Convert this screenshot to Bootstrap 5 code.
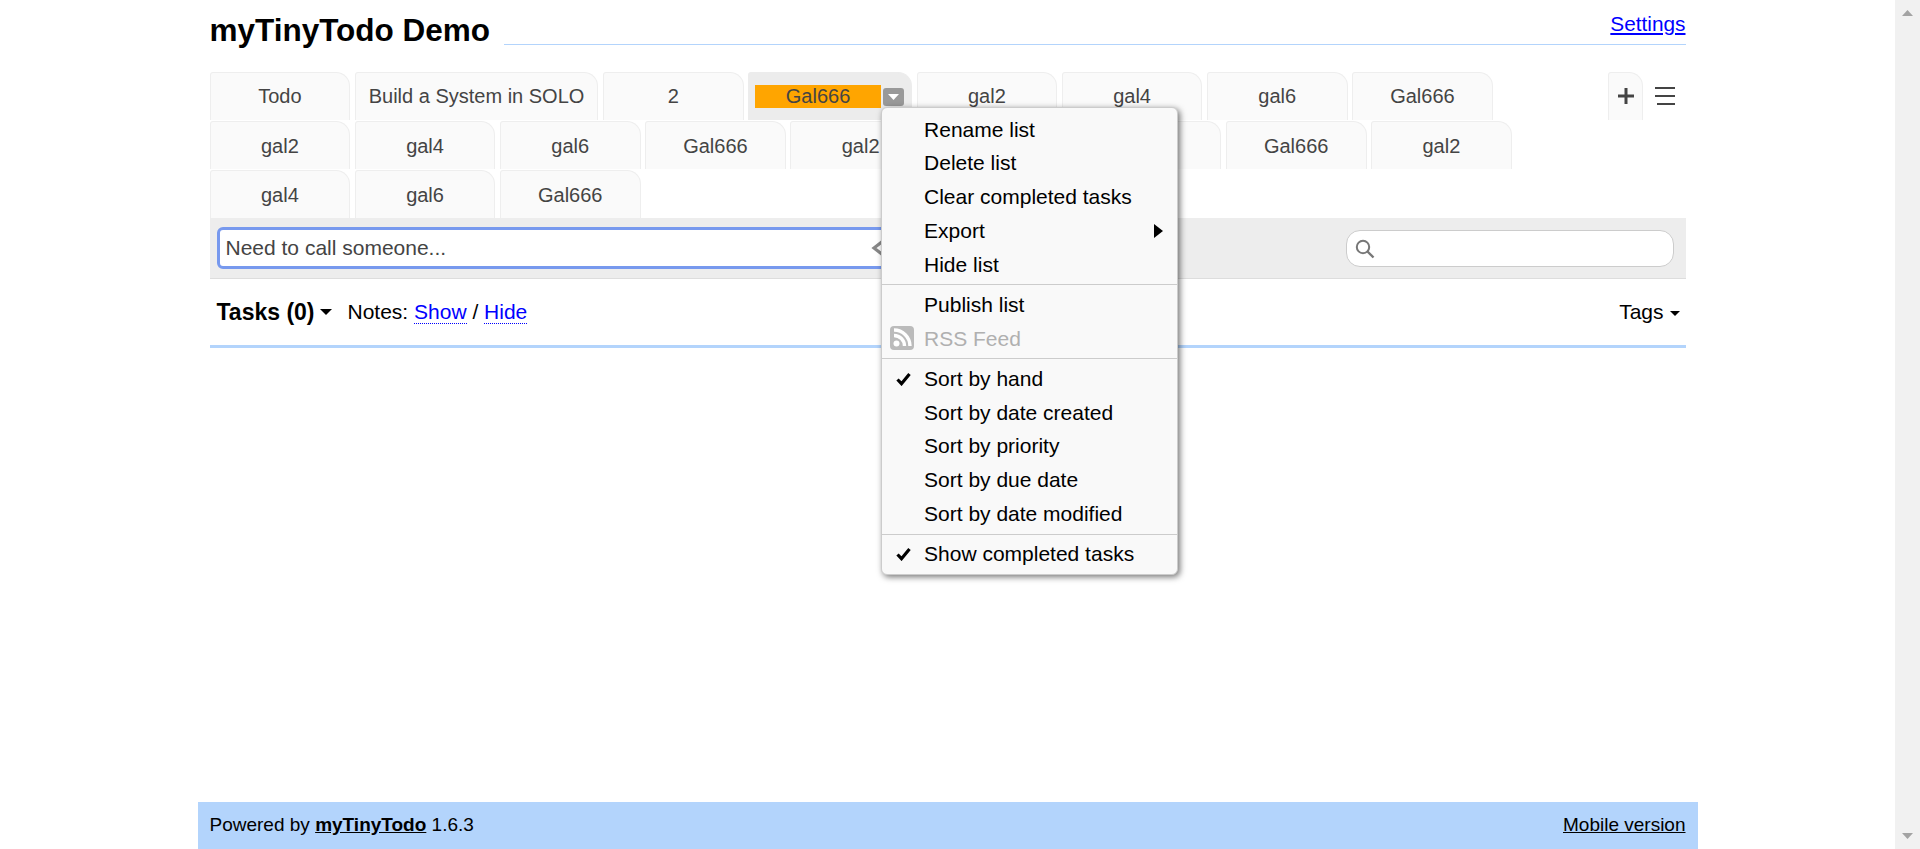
<!DOCTYPE html>
<html lang="en">
<head>
  <meta charset="UTF-8" />
  <meta name="viewport" content="width=device-width, initial-scale=1" />
  <title>myTinyTodo Demo</title>
  <link href="https://cdn.jsdelivr.net/npm/bootstrap@5.3.0/dist/css/bootstrap.min.css" rel="stylesheet" />
  <style>
    html, body { height: 849px; overflow: hidden; }
    body { font-family: "Liberation Sans", Arial, sans-serif; font-size: 21px; color: #000; background: #fff; }
    a { color: #0000ff; }

    .shell { height: 849px; }
    .page-area { min-width: 0; }
    .wrap { width: 1500px; height: 849px; margin: 0 auto; }
    .wrap-inner { padding: 0 12px; }

    .fake-scroll { width: 25px; background: #f1f1f1; padding: 10px 0; }
    .fake-scroll svg { display: block; }

    .top-bar { height: 72px; }
    .app-title { font-size: 31.5px; font-weight: 700; margin: 15px 14px 0 0; line-height: 30px; white-space: nowrap; }
    .top-line { height: 45px; border-bottom: 1px solid #b3d4fc; text-align: right; line-height: 48px; font-size: 20.8px; }

    .tab-zone { height: 145.5px; }
    .tab-list { width: 1398px; row-gap: 1.5px; column-gap: 4.5px; list-style: none; margin: 0; padding: 0; align-content: flex-start; }
    .tab-item { height: 47.5px; min-width: 140.7px; padding: 0 13px; background: #fafafa; border: 1px solid #eee; border-bottom: 0; border-radius: 3px 14px 0 0; color: #444; font-size: 20px; white-space: nowrap; }
    .tab-item:nth-child(-n+8) { padding-bottom: 1px; }
    .tab-item:nth-child(n+9) { padding-top: 1px; }
    .tab-item.tab-on { background: #ececec; border-color: #ececec; padding: 1px 7px 0 6px; position: relative; }
    .tab-title { width: 126px; height: 23px; line-height: 23px; background: #ffa500; text-align: center; margin-right: 2px; }
    .tab-btn { width: 21px; height: 18px; margin-top: 1px; background: #999; border-radius: 3px; }
    .tab-add { height: 47.5px; width: 35px; padding-left: 1px; background: #fafafa; border: 1px solid #eee; border-bottom: 0; border-radius: 3px 14px 0 0; }
    .tab-burger { width: 43px; height: 47.5px; padding-left: 1px; }

    .todo-menu.dropdown-menu { top: 34px; left: 132px; width: 297px; height: 468px; padding: 4.5px 0 0; margin: 0; background: #f9f9f9; border: 1px solid #ccc; border-radius: 6px; box-shadow: 2px 2px 6px rgba(0, 0, 0, .55); font-size: 21px; z-index: 10; }
    .todo-menu .dropdown-item { height: 33.75px; line-height: 33.75px; padding: 0 0 0 42px; color: #000; position: relative; }
    .todo-menu .dropdown-item.item-off { color: #b0b0b0; }
    .todo-menu .dropdown-divider { margin: 3px 0 2.5px; border-top: 1px solid #ccc; opacity: 1; }
    .item-ico { position: absolute; display: block; }
    .ico-check { left: 14px; top: 10px; }
    .ico-rss { left: 8px; top: 4px; }
    .ico-sub { right: 14px; top: 10px; }

    .tool-bar { height: 61.5px; background: #ededed; border-bottom: 1px solid #ddd; padding: 9.5px 12px 0 7px; }
    .quick-add { width: 720px; height: 42px; background: #fff; border: 3px solid #7799ee; border-radius: 6px; padding: 0 8px 0 6px; }
    .quick-add .form-control { padding: 0; border: 0; border-radius: 0; box-shadow: none; background: transparent; color: #444; font-size: 21px; line-height: 36px; height: 36px; }
    .quick-arrow { margin-right: 41px; }
    .find-box { width: 328px; height: 37px; margin-top: 3px; background: #fff; border: 1px solid #ccc; border-radius: 14px; padding-left: 8px; }

    .list-head { height: 69px; border-bottom: 3px solid #b3d4fc; padding: 0 6px 0 7px; }
    .list-title { font-size: 23px; font-weight: 700; margin: 0 5px 0 0; line-height: 30px; }
    .notes-box { margin-left: 16px; }
    .notes-link { text-decoration: none; border-bottom: 1px dotted #0000ff; }
    .caret-down { display: inline-block; width: 0; height: 0; border: 6.5px solid transparent; border-top-color: #000; border-bottom-width: 0; vertical-align: middle; }
    .tags-box .caret-down { border-width: 5px 5px 0; margin-left: 6px; }

    .page-foot { height: 47px; background: #b3d4fc; padding: 0 12px; font-size: 19px; }
    .page-foot a { color: #000; }
  </style>
</head>
<body>
  <div class="shell d-flex">
    <div class="page-area flex-grow-1">
      <div class="wrap d-flex flex-column">
        <div class="wrap-inner flex-grow-1">

          <!-- header -->
          <div class="top-bar d-flex align-items-start">
            <h1 class="app-title">myTinyTodo Demo</h1>
            <div class="top-line flex-grow-1"><a href="#">Settings</a></div>
          </div>

          <!-- list tabs -->
          <div class="tab-zone d-flex justify-content-between align-items-start">
            <ul class="tab-list d-flex flex-wrap">
              <li class="tab-item d-flex align-items-center justify-content-center">Todo</li>
              <li class="tab-item d-flex align-items-center justify-content-center">Build a System in SOLO</li>
              <li class="tab-item d-flex align-items-center justify-content-center">2</li>
              <li class="tab-item tab-on d-flex align-items-center">
                <span class="tab-title">Gal666</span>
                <span class="tab-btn d-flex align-items-center justify-content-center">
                  <svg width="11" height="6" viewBox="0 0 11 6"><path d="M0 0h11L5.500 6z" fill="#fff"/></svg>
                </span>

                <!-- list menu -->
                <div class="todo-menu dropdown-menu show">
                  <a class="dropdown-item" href="#">Rename list</a>
                  <a class="dropdown-item" href="#">Delete list</a>
                  <a class="dropdown-item" href="#">Clear completed tasks</a>
                  <a class="dropdown-item" href="#">Export
                    <svg class="item-ico ico-sub" width="9" height="14" viewBox="0 0 9 14"><path d="M0 0l9 7-9 7z" fill="#000"/></svg>
                  </a>
                  <a class="dropdown-item" href="#">Hide list</a>
                  <hr class="dropdown-divider" />
                  <a class="dropdown-item" href="#">Publish list</a>
                  <a class="dropdown-item item-off" href="#">
                    <svg class="item-ico ico-rss" width="24" height="24" viewBox="0 0 24 24">
                      <rect width="24" height="24" rx="4" fill="#bbb"/>
                      <circle cx="6.500" cy="17.500" r="3" fill="#fff"/>
                      <path d="M4 9.500A10.500 10.500 0 0 1 14.500 20M4 4A16 16 0 0 1 20 20" fill="none" stroke="#fff" stroke-width="3.400"/>
                    </svg>RSS Feed</a>
                  <hr class="dropdown-divider" />
                  <a class="dropdown-item" href="#">
                    <svg class="item-ico ico-check" width="15" height="14" viewBox="0 0 15 14"><path d="M1.500 7.500l4 4.200L13.500 2" fill="none" stroke="#000" stroke-width="3.200"/></svg>Sort by hand</a>
                  <a class="dropdown-item" href="#">Sort by date created</a>
                  <a class="dropdown-item" href="#">Sort by priority</a>
                  <a class="dropdown-item" href="#">Sort by due date</a>
                  <a class="dropdown-item" href="#">Sort by date modified</a>
                  <hr class="dropdown-divider" />
                  <a class="dropdown-item" href="#">
                    <svg class="item-ico ico-check" width="15" height="14" viewBox="0 0 15 14"><path d="M1.500 7.500l4 4.200L13.500 2" fill="none" stroke="#000" stroke-width="3.200"/></svg>Show completed tasks</a>
                </div>
              </li>
              <li class="tab-item d-flex align-items-center justify-content-center">gal2</li>
              <li class="tab-item d-flex align-items-center justify-content-center">gal4</li>
              <li class="tab-item d-flex align-items-center justify-content-center">gal6</li>
              <li class="tab-item d-flex align-items-center justify-content-center">Gal666</li>
              <li class="tab-item d-flex align-items-center justify-content-center">gal2</li>
              <li class="tab-item d-flex align-items-center justify-content-center">gal4</li>
              <li class="tab-item d-flex align-items-center justify-content-center">gal6</li>
              <li class="tab-item d-flex align-items-center justify-content-center">Gal666</li>
              <li class="tab-item d-flex align-items-center justify-content-center">gal2</li>
              <li class="tab-item d-flex align-items-center justify-content-center">gal4</li>
              <li class="tab-item d-flex align-items-center justify-content-center">gal6</li>
              <li class="tab-item d-flex align-items-center justify-content-center">Gal666</li>
              <li class="tab-item d-flex align-items-center justify-content-center">gal2</li>
              <li class="tab-item d-flex align-items-center justify-content-center">gal4</li>
              <li class="tab-item d-flex align-items-center justify-content-center">gal6</li>
              <li class="tab-item d-flex align-items-center justify-content-center">Gal666</li>
            </ul>
            <div class="d-flex">
              <div class="tab-add d-flex align-items-center justify-content-center">
                <svg width="16" height="16" viewBox="0 0 16 16"><path d="M6.500 0h3v6.500H16v3H9.500V16h-3V9.500H0v-3h6.500z" fill="#444"/></svg>
              </div>
              <div class="tab-burger d-flex align-items-center justify-content-center">
                <svg width="20" height="18" viewBox="0 0 20 18"><path d="M0 1h20M0 9h20M2 17h18" stroke="#444" stroke-width="2"/></svg>
              </div>
            </div>
          </div>

          <!-- add / search -->
          <div class="tool-bar d-flex justify-content-between align-items-start">
            <div class="quick-add d-flex align-items-center">
              <input type="text" class="form-control" value="Need to call someone..." />
              <svg class="quick-arrow flex-shrink-0" width="14" height="20" viewBox="0 0 14 20"><path d="M12 3l-9 7 9 7" fill="none" stroke="#888" stroke-width="3.200"/></svg>
            </div>
            <div class="find-box d-flex align-items-center">
              <svg width="20" height="20" viewBox="0 0 20 20"><circle cx="8" cy="8" r="6.200" fill="none" stroke="#777" stroke-width="2"/><path d="M12.500 12.500l6 6" stroke="#777" stroke-width="2.400"/></svg>
            </div>
          </div>

          <!-- tasks header -->
          <div class="list-head d-flex justify-content-between align-items-center">
            <div class="d-flex align-items-center">
              <h2 class="list-title">Tasks (0)</h2>
              <span class="caret-down"></span>
              <span class="notes-box">Notes: <a class="notes-link" href="#">Show</a> / <a class="notes-link" href="#">Hide</a></span>
            </div>
            <div class="tags-box">Tags<span class="caret-down"></span></div>
          </div>
        </div>

        <!-- footer -->
        <div class="page-foot d-flex justify-content-between align-items-center">
          <div>Powered by <a href="#" class="fw-bold">myTinyTodo</a> 1.6.3</div>
          <a href="#">Mobile version</a>
        </div>
      </div>
    </div>

    <!-- scrollbar -->
    <div class="fake-scroll d-flex flex-column justify-content-between align-items-center">
      <svg width="11" height="6" viewBox="0 0 11 6"><path d="M5.500 0L11 6H0z" fill="#a3a3a3"/></svg>
      <svg width="11" height="6" viewBox="0 0 11 6"><path d="M0 0h11L5.500 6z" fill="#a3a3a3"/></svg>
    </div>
  </div>

  <script src="https://cdn.jsdelivr.net/npm/bootstrap@5.3.0/dist/js/bootstrap.bundle.min.js"></script>
</body>
</html>
